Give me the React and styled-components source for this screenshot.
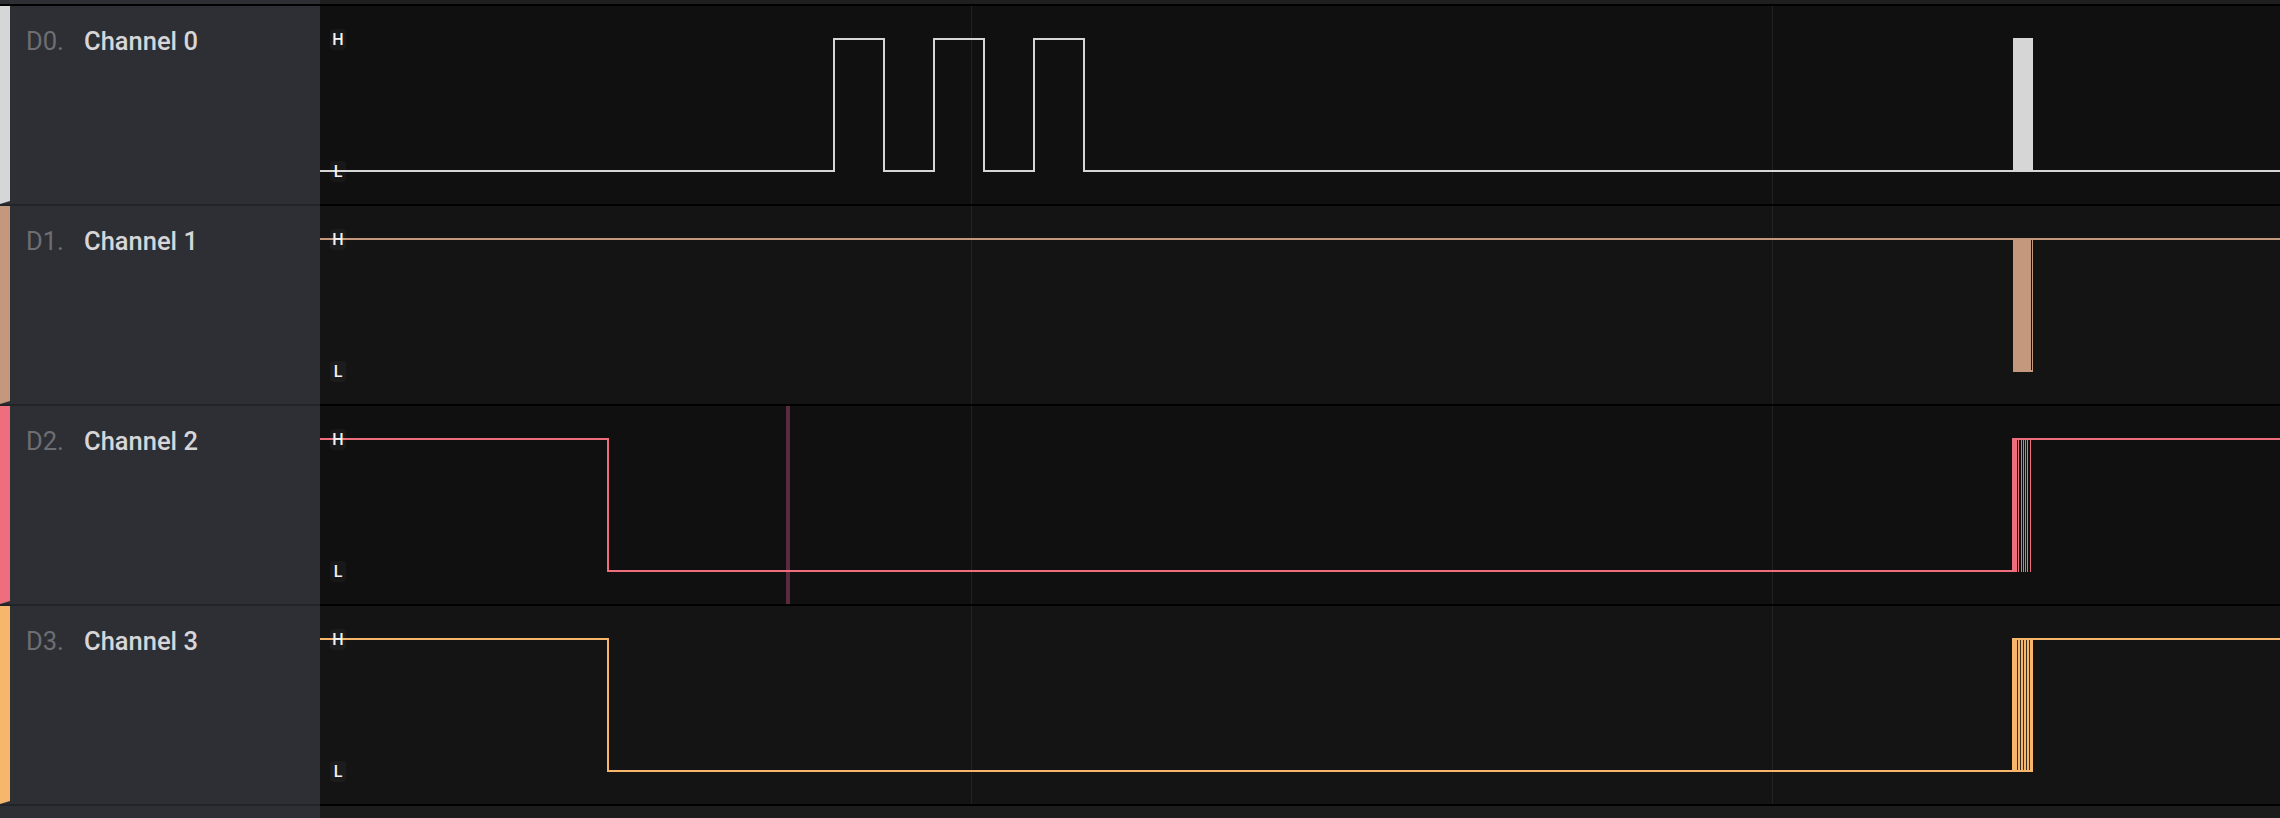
import styled, { createGlobalStyle } from "styled-components";

const PANEL_WIDTH = 320;
const GRAPH_WIDTH = 1960;
const ROW_HEIGHT = 198;
const HIGH_Y = 33;
const LOW_Y = 165;
const GRID_X = [651, 1452];

const CHANNELS = [
  { id: "D0", name: "Channel 0", color: "#d6d6d6", bg: "#101010" },
  { id: "D1", name: "Channel 1", color: "#c4987c", bg: "#141414" },
  { id: "D2", name: "Channel 2", color: "#ee6e7e", bg: "#101010" },
  { id: "D3", name: "Channel 3", color: "#f6b66b", bg: "#141414" },
];

const GlobalStyle = createGlobalStyle`
  html, body {
    margin: 0;
    padding: 0;
    background: #101010;
    font-family: Roboto, "Liberation Sans", sans-serif;
  }
`;

function Trace0({ color }) {
  const edges = [514, 564, 614, 664, 714, 764];
  let d = `M0,${LOW_Y}`;
  edges.forEach((x, i) => {
    d += ` H${x} V${i % 2 === 0 ? HIGH_Y : LOW_Y}`;
  });
  d += ` H${GRAPH_WIDTH}`;
  return (
    <>
      <path d={d} stroke={color} strokeWidth="2" fill="none" />
      <rect x="1693" y={HIGH_Y - 1} width="20" height={LOW_Y - HIGH_Y + 2} fill={color} />
    </>
  );
}

function Trace1({ color }) {
  return (
    <>
      <path d={`M0,${HIGH_Y} H${GRAPH_WIDTH}`} stroke={color} strokeWidth="2" fill="none" />
      <rect x="1693" y={HIGH_Y - 1} width="20" height={LOW_Y - HIGH_Y + 2} fill={color} />
      <rect x="1711" y={HIGH_Y + 1} width="1" height={LOW_Y - HIGH_Y - 2} fill="#141414" />
    </>
  );
}

function Trace2({ color }) {
  // burst of short pulses right before the signal settles high
  const pulses = [1696, 1698, 1701, 1703, 1705, 1707, 1710];
  return (
    <>
      <rect x="466" y="0" width="4" height={ROW_HEIGHT} fill="#5b2a3e" />
      <path
        d={`M0,${HIGH_Y} H288 V${LOW_Y} H1693 V${HIGH_Y} H${GRAPH_WIDTH}`}
        stroke={color}
        strokeWidth="2"
        fill="none"
      />
      <rect x="1692" y={HIGH_Y} width="4" height={LOW_Y - HIGH_Y + 1} fill={color} />
      {pulses.map((x) => (
        <rect key={x} x={x} y={HIGH_Y + 1} width="1" height={LOW_Y - HIGH_Y} fill={color} />
      ))}
    </>
  );
}

function Trace3({ color }) {
  const gaps = [1697, 1700, 1703, 1706, 1709];
  return (
    <>
      <path
        d={`M0,${HIGH_Y} H288 V${LOW_Y} H1713 M1692,${HIGH_Y} H${GRAPH_WIDTH}`}
        stroke={color}
        strokeWidth="2"
        fill="none"
      />
      <rect x="1692" y={HIGH_Y - 1} width="21" height={LOW_Y - HIGH_Y + 2} fill={color} />
      {gaps.map((x) => (
        <rect key={x} x={x} y={HIGH_Y + 1} width="1" height={LOW_Y - HIGH_Y - 2} fill="#3a2e22" />
      ))}
    </>
  );
}

const TRACES = [Trace0, Trace1, Trace2, Trace3];

export default function App() {
  return (
    <>
      <GlobalStyle />
      <Screen>
        <TopStrip>
          <PanelCap />
          <GraphCap />
        </TopStrip>
        {CHANNELS.map((ch, i) => {
          const Trace = TRACES[i];
          return (
            <Row key={ch.id}>
              <Panel>
                <ColorBar color={ch.color} />
                <LabelArea>
                  <Index>{ch.id}.</Index>
                  <Name>{ch.name}</Name>
                </LabelArea>
              </Panel>
              <Graph bg={ch.bg}>
                <svg width={GRAPH_WIDTH} height={ROW_HEIGHT} shapeRendering="crispEdges">
                  {GRID_X.map((x) => (
                    <rect key={x} x={x} y="0" width="1" height={ROW_HEIGHT} fill="#222222" />
                  ))}
                  <Trace color={ch.color} />
                </svg>
                <Level top={HIGH_Y}>H</Level>
                <Level top={LOW_Y}>L</Level>
              </Graph>
            </Row>
          );
        })}
        <BottomStrip>
          <PanelCap />
          <GraphFoot />
        </BottomStrip>
      </Screen>
    </>
  );
}

const Screen = styled.div`
  width: 2280px;
  height: 818px;
  display: flex;
  flex-direction: column;
  overflow: hidden;
`;

const TopStrip = styled.div`
  display: flex;
  height: 4px;
  border-bottom: 2px solid #000;
`;

const BottomStrip = styled.div`
  display: flex;
  flex: 1;
`;

const PanelCap = styled.div`
  width: ${PANEL_WIDTH}px;
  background: #2e2f34;
`;

const GraphCap = styled.div`
  flex: 1;
  background: #1f1f1f;
`;

const GraphFoot = styled.div`
  flex: 1;
  background: #1c1c1c;
`;

const Row = styled.div`
  display: flex;
  height: ${ROW_HEIGHT + 2}px;
`;

const Panel = styled.div`
  width: ${PANEL_WIDTH}px;
  display: flex;
  background: #2e2f34;
  border-bottom: 2px solid #232428;
`;

const ColorBar = styled.div`
  width: 10px;
  background: ${(p) => p.color};
  clip-path: polygon(0 0, 100% 0, 100% calc(100% - 3px), 0 100%);
`;

const LabelArea = styled.div`
  flex: 1;
  display: flex;
  align-items: flex-start;
  padding: 20px 0 0 16px;
  font-size: 25.5px;
  line-height: 30px;
`;

const Index = styled.span`
  width: 58px;
  color: #6d6e73;
  font-weight: 400;
`;

const Name = styled.span`
  color: #d6d6d8;
  font-weight: 500;
`;

const Graph = styled.div`
  position: relative;
  flex: 1;
  height: ${ROW_HEIGHT}px;
  background: ${(p) => p.bg};
  border-bottom: 2px solid #000;
  overflow: hidden;

  svg {
    display: block;
  }
`;

const Level = styled.span`
  position: absolute;
  left: 10px;
  top: ${(p) => p.top - 10}px;
  width: 16px;
  height: 21px;
  display: flex;
  align-items: center;
  justify-content: center;
  border-radius: 4px;
  background: rgba(255, 255, 255, 0.035);
  color: #f4f4f4;
  font-size: 16px;
  font-weight: 500;
`;
